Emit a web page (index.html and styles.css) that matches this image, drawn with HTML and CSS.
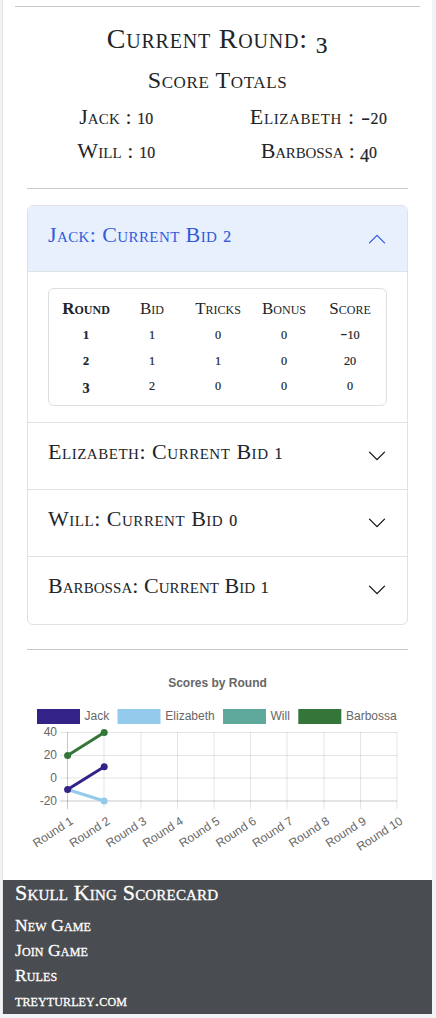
FILE: index.html
```html
<!DOCTYPE html>
<html lang="en">
<head>
<meta charset="utf-8">
<title>Skull King Scorecard</title>
<link rel="stylesheet" href="styles.css">
</head>
<body>
<div class="page">
  <main class="main">
    <hr class="rule">
    <h1 class="round-title">Current Round: <span class="num low">3</span></h1>
    <h2 class="totals-title">Score Totals</h2>
    <div class="totals">
      <div class="jack">Jack : <span class="num">10</span></div>
      <div class="elizabeth">Elizabeth : <span class="dash">-</span><span class="num">20</span></div>
      <div class="will">Will : <span class="num">10</span></div>
      <div class="barbossa">Barbossa : <span class="num low">4</span><span class="num">0</span></div>
    </div>
    <div class="inner">
      <hr class="rule">
      <div class="accordion">
        <section class="item">
          <div class="head open"><h3>Jack: Current Bid <span class="num">2</span></h3>
            <svg class="chev" viewBox="0 0 20 20"><path d="M2.5 13.9 10 6.4l7.5 7.5" /></svg></div>
          <div class="body">
            <table class="scores">
              <thead><tr><th>Round</th><td>Bid</td><td>Tricks</td><td>Bonus</td><td>Score</td></tr></thead>
              <tbody>
                <tr><th><span class="num">1</span></th><td><span class="num">1</span></td><td><span class="num">0</span></td><td><span class="num">0</span></td><td><span class="dash">-</span><span class="num">10</span></td></tr>
                <tr><th><span class="num">2</span></th><td><span class="num">1</span></td><td><span class="num">1</span></td><td><span class="num">0</span></td><td><span class="num">20</span></td></tr>
                <tr><th><span class="num low">3</span></th><td><span class="num">2</span></td><td><span class="num">0</span></td><td><span class="num">0</span></td><td><span class="num">0</span></td></tr>
              </tbody>
            </table>
          </div>
        </section>
        <section class="item"><div class="head"><h3>Elizabeth: Current Bid <span class="num">1</span></h3>
          <svg class="chev" viewBox="0 0 20 20"><path d="M2.5 6.1 10 13.6l7.5-7.5" /></svg></div></section>
        <section class="item"><div class="head"><h3>Will: Current Bid <span class="num">0</span></h3>
          <svg class="chev" viewBox="0 0 20 20"><path d="M2.5 6.1 10 13.6l7.5-7.5" /></svg></div></section>
        <section class="item"><div class="head"><h3 class="tight">Barbossa: Current Bid <span class="num">1</span></h3>
          <svg class="chev" viewBox="0 0 20 20"><path d="M2.5 6.1 10 13.6l7.5-7.5" /></svg></div></section>
      </div>
      <hr class="rule">
      <svg class="chart" viewBox="27 660 381 200">
        <text class="chart-title" x="217.5" y="686.5" text-anchor="middle">Scores by Round</text>
        <g>
          <rect x="37" y="709" width="43" height="15" fill="#332288"/>
          <rect x="117.5" y="709" width="43" height="15" fill="#94caeb"/>
          <rect x="223" y="709" width="43" height="15" fill="#5fa89c"/>
          <rect x="298.3" y="709" width="43" height="15" fill="#34763a"/>
          <text x="84.5" y="719.5">Jack</text>
          <text x="165.3" y="719.5">Elizabeth</text>
          <text x="270.5" y="719.5">Will</text>
          <text x="346" y="719.5">Barbossa</text>
        </g>
        <g stroke="#000" stroke-opacity=".1">
          <path d="M60 732.5H397M60 755.5H397M60 778H397M60 801H397M104 732V809M141 732V809M177.5 732V809M214 732V809M250.5 732V809M287 732V809M324 732V809M360.5 732V809M397 732V809"/>
          <path d="M67.5 732V809" stroke-opacity=".22"/>
          <path d="M60 801H397" stroke-opacity=".06" stroke-width="2"/>
        </g>
        <g text-anchor="end">
          <text x="57" y="735.8">40</text><text x="57" y="759">20</text>
          <text x="57" y="781.6">0</text><text x="57" y="804.6">-20</text>
        </g>
        <g text-anchor="end">
          <text transform="translate(74.2 823) rotate(-33)">Round 1</text>
          <text transform="translate(110.8 823) rotate(-33)">Round 2</text>
          <text transform="translate(147.4 823) rotate(-33)">Round 3</text>
          <text transform="translate(184 823) rotate(-33)">Round 4</text>
          <text transform="translate(220.6 823) rotate(-33)">Round 5</text>
          <text transform="translate(257.2 823) rotate(-33)">Round 6</text>
          <text transform="translate(293.8 823) rotate(-33)">Round 7</text>
          <text transform="translate(330.4 823) rotate(-33)">Round 8</text>
          <text transform="translate(367 823) rotate(-33)">Round 9</text>
          <text transform="translate(403.6 823) rotate(-33)">Round 10</text>
        </g>
        <g stroke-width="3">
          <path d="M67.6 755.4 104.2 732.5" stroke="#34763a"/>
          <path d="M67.6 789.5 104.2 801" stroke="#94caeb"/>
          <path d="M67.6 789.5 104.2 766.8" stroke="#332288"/>
        </g>
        <g fill="#34763a"><circle cx="67.6" cy="755.4" r="3.5"/><circle cx="104.2" cy="732.5" r="3.5"/></g>
        <circle cx="104.2" cy="801" r="3.5" fill="#94caeb"/>
        <g fill="#332288"><circle cx="67.6" cy="789.5" r="3.5"/><circle cx="104.2" cy="766.8" r="3.5"/></g>
      </svg>
    </div>
  </main>
  <footer class="footer">
    <h4>Skull King Scorecard</h4>
    <a>New Game</a><a>Join Game</a><a>Rules</a><a>treyturley.com</a>
  </footer>
</div>
</body>
</html>
```
FILE: styles.css
```css
* { box-sizing: border-box; }
body {
  margin: 0;
  height: 1018px;
  overflow: hidden;
  background: #f2f3f4;
  color: #212529;
  font-family: "Liberation Serif", serif;
  font-variant-caps: small-caps;
}
.page {
  width: 430px;
  height: 1014px;
  margin-left: 2px;
  border-left: 1px solid #e2e3e4;
  background: #fff;
  display: flex;
  flex-direction: column;
}
.main { height: 880px; padding: 6px 12px 0; }
.rule { height: 1px; border: 0; margin: 0; background: #c8c9ca; }
h1, h2, h3, h4 { margin: 0; font-weight: 400; white-space: nowrap; }
.num { font-size: .72em; line-height: 0; -webkit-text-stroke: .2px currentColor; }
.low { font-size: .84em; vertical-align: -.2em; }
.dash { display: inline-block; line-height: 0; transform: scaleX(1.25); margin: 0 .04em; }
.round-title { margin-top: 15px; height: 33px; font-size: 28px; line-height: 33px; letter-spacing: .8px; text-align: center; }
.totals-title { margin-top: 10px; height: 30px; font-size: 24px; line-height: 30px; letter-spacing: .6px; text-align: center; }
.totals { display: grid; grid-template-columns: 1fr 1fr; margin-top: 4px; font-size: 22px; line-height: 36px; text-align: center; height: 67px; grid-auto-rows: 33.5px; }
.jack { letter-spacing: .1px; }
.elizabeth { letter-spacing: .6px; }
.will { letter-spacing: .1px; }
.barbossa { letter-spacing: -.15px; }
.inner { padding: 22px 12px 0; }
.accordion { margin: 16px 0 24px; border: 1px solid #dee2e6; border-radius: 6px; overflow: hidden; height: 420px; }
.item + .item { border-top: 1px solid #dee2e6; }
.head { display: flex; justify-content: space-between; align-items: flex-start; height: 66px; padding: 15px 20px 0; }
.head h3 { font-size: 22px; line-height: 28px; letter-spacing: .52px; }
.head .tight { letter-spacing: .05px; }
.head.open { background: #e8f0fe; color: #315bdc; height: 66px; border-bottom: 1px solid #dee2e6; }
.open h3 { letter-spacing: .4px; }
.chev { width: 20px; height: 20px; margin-top: 8px; fill: none; stroke: #111; stroke-width: 1.3; stroke-linecap: round; stroke-linejoin: round; }
.open .chev { stroke: #315bdc; }
.body { height: 150px; padding: 16px 20px; }
.scores { display: block; height: 118px; border: 1px solid #dcdedf; border-radius: 6px; padding: 7px 4px 0; font-size: 17px; line-height: 25.3px; text-align: center; border-spacing: 0; }
.scores thead, .scores tbody { display: block; }
.scores tr { display: grid; grid-template-columns: repeat(5, 66px); height: 25.3px; }
.scores th, .scores td { padding: 0; }
.chart { display: block; width: 381px; height: 200px; margin-top: 10px; fill: none; }
.chart text { fill: #666; font: 12px "Liberation Sans", sans-serif; font-variant-caps: normal; }
.chart .chart-title { font-weight: 700; }
.footer { height: 134px; padding: 0 12px; background: #494c50; color: #fff; display: flex; flex-direction: column; -webkit-text-stroke: .3px #fff; }
.footer h4 { font-size: 22px; line-height: 26px; height: 33px; letter-spacing: .18px; }
.footer a { font-size: 17.5px; line-height: 25px; letter-spacing: .12px; }
```
